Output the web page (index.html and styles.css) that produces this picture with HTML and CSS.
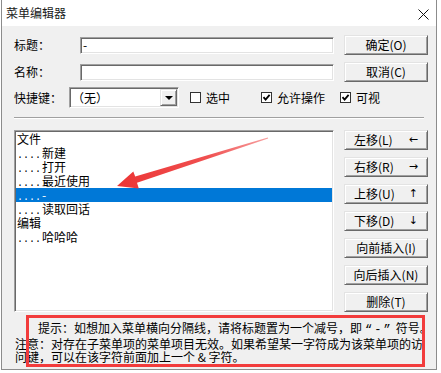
FILE: index.html
```html
<!DOCTYPE html>
<html lang="zh-CN">
<head>
  <meta charset="UTF-8" />
  <title>菜单编辑器</title>
  <link rel="stylesheet" href="styles.css">
</head>
<body>
  <div class="window">
    <div class="titlebar">
      <span class="title">菜单编辑器</span>
      <svg class="close" viewBox="0 0 11 11"><path d="M0.5 0.5 L10.5 10.5 M10.5 0.5 L0.5 10.5"/></svg>
    </div>

    <div class="content">
      <div class="row row-title">
        <span class="lbl">标题：</span>
        <div class="field">-</div>
        <button class="btn">确定(O)</button>
      </div>

      <div class="row row-name">
        <span class="lbl">名称：</span>
        <div class="field"></div>
        <button class="btn">取消(C)</button>
      </div>

      <div class="row row-keys">
        <span class="lbl lbl-short">快捷键：</span>
        <div class="combo">
          <span class="combo-text">（无）</span>
          <span class="combo-btn"><span class="tri"></span></span>
        </div>
        <label class="check check-first">
          <span class="box"></span>
          <span>选中</span>
        </label>
        <label class="check check-mid">
          <span class="box checked">
            <svg viewBox="0 0 9 9"><path d="M1.5 4.2 L3.6 6.6 L7.6 1.8"/></svg>
          </span>
          <span>允许操作</span>
        </label>
        <label class="check">
          <span class="box checked">
            <svg viewBox="0 0 9 9"><path d="M1.5 4.2 L3.6 6.6 L7.6 1.8"/></svg>
          </span>
          <span>可视</span>
        </label>
      </div>

      <div class="sep"></div>

      <div class="lower">
        <ul class="list">
          <li>文件</li>
          <li><span class="dots">....</span>新建</li>
          <li><span class="dots">....</span>打开</li>
          <li><span class="dots">....</span>最近使用</li>
          <li class="selected"><span class="dots">....</span>-</li>
          <li><span class="dots">....</span>读取回话</li>
          <li>编辑</li>
          <li><span class="dots">....</span>哈哈哈</li>
        </ul>

        <div class="side">
          <button class="btn btn-move"><span>左移(L)</span><span class="arr">←</span></button>
          <button class="btn btn-move"><span>右移(R)</span><span class="arr">→</span></button>
          <button class="btn btn-move"><span>上移(U)</span><span class="arr">↑</span></button>
          <button class="btn btn-move"><span>下移(D)</span><span class="arr">↓</span></button>
          <button class="btn">向前插入(I)</button>
          <button class="btn">向后插入(N)</button>
          <button class="btn">删除(T)</button>
        </div>
      </div>

      <div class="hint">
        <div class="hint-line first">提示：如想加入菜单横向分隔线，请将标题置为一个减号，即<span class="quote">“-”</span>符号。</div>
        <div class="hint-line">注意：对存在子菜单项的菜单项目无效。如果希望某一字符成为该菜单项的访</div>
        <div class="hint-line">问键，可以在该字符前面加上一个 &amp; 字符。</div>
      </div>
    </div>
  </div>

  <!-- annotation overlays -->
  <svg class="arrow" viewBox="0 0 441 373">
    <defs>
      <linearGradient id="arrowFade" x1="268" y1="138" x2="117" y2="186" gradientUnits="userSpaceOnUse">
        <stop offset="0" stop-color="#f7a0a0"/>
        <stop offset="0.4" stop-color="#f05050"/>
        <stop offset="1" stop-color="#ec3535"/>
      </linearGradient>
    </defs>
    <polygon fill="url(#arrowFade)" points="267.8,137.5 135.2,176.6 133.3,171.4 117,186 138.8,188.5 137,182.8 268.2,138.6"/>
  </svg>
  <div class="callout"></div>
</body>
</html>
```

FILE: styles.css
```css
* {
  box-sizing: border-box;
  margin: 0;
  padding: 0;
}
body {
  font-family: "Noto Sans CJK SC", "Liberation Sans", sans-serif;
  font-size: 12px;
  color: #000;
  background: #fff;
  width: 441px;
  height: 373px;
  overflow: hidden;
  position: relative;
}
.window {
  margin-left: 1px;
  width: 436px;
  height: 370px;
  border: 1px solid #8c8c8c;
  border-top: none;
  background: #f0f0f0;
  display: flex;
  flex-direction: column;
}
.titlebar {
  height: 26px;
  background: #fff;
  display: flex;
  align-items: center;
  justify-content: space-between;
  padding: 0 7px 0 4px;
}
.title {
  line-height: 14px;
  color: #1a1a1a;
}
.close {
  width: 11px;
  height: 11px;
  stroke: #111;
  stroke-width: 1;
  fill: none;
  margin-top: 2px;
}
.content {
  flex: 1;
  padding: 9px 0 0 12px;
}
.row {
  display: flex;
  align-items: center;
}
.row-title {
  height: 20px;
  margin-bottom: 7px;
}
.row-name {
  height: 20px;
  margin-bottom: 5px;
}
.row-keys {
  height: 21px;
}
.lbl {
  width: 66px;
  line-height: 14px;
}
.lbl-short {
  width: 55px;
}
.field {
  width: 254px;
  height: 17px;
  margin-right: 10px;
  padding-left: 2px;
  line-height: 14px;
  background: #fff;
  border: 1px solid;
  border-color: #a0a0a0 #fff #fff #a0a0a0;
  box-shadow: inset 1px 1px #696969, inset -1px -1px #e3e3e3;
}
.btn {
  width: 84px;
  height: 20px;
  font: inherit;
  color: #000;
  background: #f0f0f0;
  border: 1px solid;
  border-color: #e3e3e3 #696969 #696969 #e3e3e3;
  box-shadow: inset 1px 1px #fff, inset -1px -1px #a0a0a0;
  line-height: 16px;
  display: flex;
  align-items: center;
  justify-content: center;
}
.btn-move {
  justify-content: space-between;
  padding: 0 9px 0 9px;
}
.arr {
  font-family: "DejaVu Sans", sans-serif;
  font-size: 11px;
}
.combo {
  width: 110px;
  height: 21px;
  background: #fff;
  border: 1px solid;
  border-color: #a0a0a0 #fff #fff #a0a0a0;
  box-shadow: inset 1px 1px #696969, inset -1px -1px #e3e3e3;
  display: flex;
  align-items: center;
  justify-content: space-between;
  padding: 1px 1px 1px 2px;
}
.combo-text {
  line-height: 14px;
}
.combo-btn {
  width: 17px;
  height: 17px;
  background: #f0f0f0;
  border: 1px solid;
  border-color: #e3e3e3 #696969 #696969 #e3e3e3;
  box-shadow: inset 1px 1px #fff, inset -1px -1px #a0a0a0;
  display: flex;
  align-items: center;
  justify-content: center;
}
.tri {
  width: 0;
  height: 0;
  border-left: 4px solid transparent;
  border-right: 4px solid transparent;
  border-top: 4px solid #000;
  margin-top: 1px;
}
.check {
  display: flex;
  align-items: center;
  gap: 5px;
  line-height: 14px;
}
.check-first {
  margin-left: 11px;
  width: 71px;
}
.check-mid {
  width: 79px;
}
.box {
  width: 11px;
  height: 11px;
  background: #fff;
  border: 1px solid #333;
  display: flex;
  align-items: center;
  justify-content: center;
}
.box svg {
  width: 9px;
  height: 9px;
  fill: none;
  stroke: #000;
  stroke-width: 1.8;
}
.sep {
  width: 410px;
  height: 2px;
  margin: 9px 0 11px 0;
  border-top: 1px solid #a0a0a0;
  border-bottom: 1px solid #fff;
}
.lower {
  display: flex;
  gap: 10px;
  height: 182px;
}
.list {
  list-style: none;
  width: 320px;
  height: 182px;
  background: #fff;
  border: 1px solid;
  border-color: #a0a0a0 #fff #fff #a0a0a0;
  box-shadow: inset 1px 1px #696969, inset -1px -1px #e3e3e3;
  padding: 1px 1px 0 1px;
}
.list li {
  height: 14px;
  line-height: 14px;
  padding-left: 1px;
  white-space: nowrap;
}
.list li.selected {
  background: #0078d7;
  color: #fff;
}
.dots {
  font-family: "Liberation Mono", monospace;
  font-size: 10px;
  display: inline-block;
  width: 25px;
}
.side {
  display: flex;
  flex-direction: column;
  gap: 7px;
}
.hint {
  margin-top: 9px;
  padding-left: 1px;
  line-height: 13px;
}
.hint-line {
  white-space: nowrap;
}
.hint-line.first {
  text-indent: 23px;
}
.quote {
  font-family: "Liberation Mono", monospace;
  letter-spacing: 2px;
  padding: 0 3px;
}
.arrow {
  position: absolute;
  left: 0;
  top: 0;
  width: 441px;
  height: 373px;
  pointer-events: none;
}
.callout {
  position: absolute;
  left: 26px;
  top: 315px;
  width: 399px;
  height: 52px;
  border: 3px solid #f23c3c;
  pointer-events: none;
}
```
